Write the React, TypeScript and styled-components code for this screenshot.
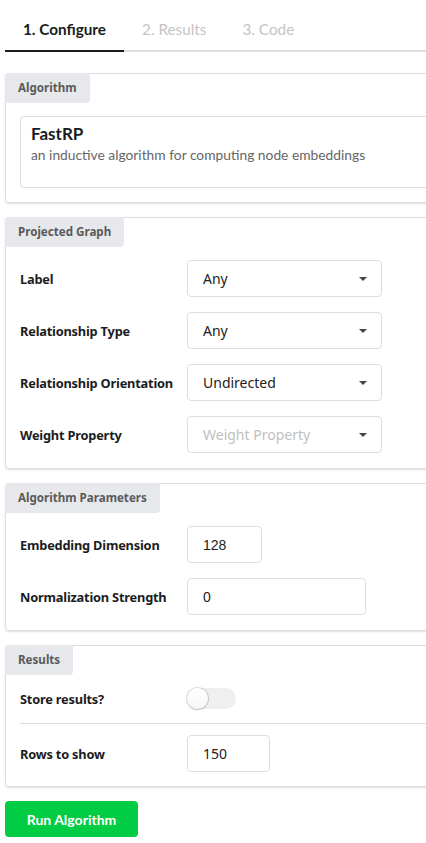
import * as React from 'react'
import styled, { createGlobalStyle } from 'styled-components'

const GlobalStyle = createGlobalStyle`
  html, body {
    margin: 0;
    padding: 0;
    background: #ffffff;
    overflow: hidden;
  }
  body {
    font-family: Lato, "Noto Sans", sans-serif;
    color: rgba(0, 0, 0, 0.87);
  }
`

const Page = styled.div`
  width: 470px;
  padding: 9px 0 0 5px;
  box-sizing: border-box;
`

const TabBar = styled.div`
  display: flex;
  border-bottom: 2px solid #dedede;
  margin-bottom: 21px;
`

const Tab = styled.div<{ $active?: boolean }>`
  padding: 13px 18px;
  font-family: Lato, sans-serif;
  font-size: 15.3px;
  line-height: 15px;
  font-weight: ${p => (p.$active ? 700 : 400)};
  color: ${p => (p.$active ? '#1b1c1d' : '#c4c4c4')};
  border-bottom: 2px solid ${p => (p.$active ? '#1b1c1d' : 'transparent')};
  margin-bottom: -2px;
`

const Segment = styled.section<{ $bottom: number }>`
  border: 1px solid #dededf;
  border-radius: 4px;
  box-shadow: 0 1px 2px rgba(34, 36, 38, 0.15);
  margin-bottom: 14px;
  padding-bottom: ${p => p.$bottom}px;
`

const SegmentLabel = styled.div`
  display: inline-block;
  margin: -1px 0 0 -1px;
  padding: 0 13px;
  height: 30px;
  line-height: 30px;
  background: #e6e8eb;
  border-radius: 4px 0 4px 0;
  font-family: "Noto Sans", sans-serif;
  font-weight: 700;
  font-size: 11.6px;
  color: #5a5a5a;
`

const SegmentBody = styled.div`
  padding: 13px 0 0 14px;
  display: flex;
  flex-direction: column;
`

const Card = styled.div`
  border: 1px solid #dededf;
  border-radius: 4px;
  padding: 6px 10px 22px;
`

const CardHeader = styled.div`
  font-family: Lato, sans-serif;
  font-weight: 700;
  font-size: 17px;
  line-height: 22px;
  color: #1b1c1d;
`

const CardDescription = styled.div`
  font-family: Lato, sans-serif;
  font-size: 13.8px;
  line-height: 20px;
  color: #666666;
`

const FieldList = styled.div<{ $gap?: number }>`
  display: flex;
  flex-direction: column;
  gap: ${p => p.$gap ?? 15}px;
`

const Field = styled.div`
  display: flex;
  align-items: center;
`

const FieldLabel = styled.label`
  width: 167px;
  flex: none;
  font-family: "Noto Sans", sans-serif;
  font-weight: 700;
  font-size: 12.8px;
  letter-spacing: -0.2px;
  color: #1b1c1d;
`

const Select = styled.div<{ $placeholder?: boolean }>`
  width: 195px;
  height: 37px;
  box-sizing: border-box;
  border: 1px solid #dededf;
  border-radius: 4px;
  padding: 0 14px 0 15px;
  display: flex;
  align-items: center;
  justify-content: space-between;
  font-family: "Noto Sans", sans-serif;
  font-size: 14px;
  color: ${p => (p.$placeholder ? '#bfbfbf' : '#222222')};
`

const Caret = styled.span`
  width: 0;
  height: 0;
  border-left: 4px solid transparent;
  border-right: 4px solid transparent;
  border-top: 4px solid #444444;
`

const TextInput = styled.input<{ $width: number; $mono?: boolean }>`
  width: ${p => p.$width}px;
  height: 37px;
  box-sizing: border-box;
  border: 1px solid #dededf;
  border-radius: 4px;
  padding: 0 14px 0 15px;
  font-family: ${p => (p.$mono ? '"Liberation Sans", Arial' : '"Noto Sans"')}, sans-serif;
  font-size: 14px;
  color: #222222;
  outline: none;
  background: #ffffff;
`

const Toggle = styled.div`
  width: 49px;
  height: 21px;
  border-radius: 11px;
  background: #efefef;
  position: relative;
`

const Knob = styled.span`
  position: absolute;
  left: 0;
  top: 0;
  width: 21px;
  height: 21px;
  box-sizing: border-box;
  border-radius: 50%;
  background: linear-gradient(#ffffff, #f6f6f6);
  box-shadow: 0 0 0 1px rgba(34, 36, 38, 0.15), 0 1px 2px rgba(34, 36, 38, 0.15);
`

const Divider = styled.hr`
  border: none;
  border-top: 1px solid #dededf;
  margin: 14px 0 11px;
`

const RunButton = styled.button`
  width: 133px;
  height: 36px;
  border: none;
  border-radius: 4px;
  background: #00cc44;
  color: #ffffff;
  font-family: Lato, sans-serif;
  font-weight: 700;
  font-size: 14px;
  cursor: pointer;
`

type SelectField = { label: string; value: string; placeholder?: boolean }

const graphFields: SelectField[] = [
  { label: 'Label', value: 'Any' },
  { label: 'Relationship Type', value: 'Any' },
  { label: 'Relationship Orientation', value: 'Undirected' },
  { label: 'Weight Property', value: 'Weight Property', placeholder: true },
]

export default function App() {
  return (
    <Page>
      <GlobalStyle />
      <TabBar>
        <Tab $active>1. Configure</Tab>
        <Tab>2. Results</Tab>
        <Tab>3. Code</Tab>
      </TabBar>

      <Segment $bottom={14}>
        <SegmentLabel>Algorithm</SegmentLabel>
        <SegmentBody>
          <Card>
            <CardHeader>FastRP</CardHeader>
            <CardDescription>an inductive algorithm for computing node embeddings</CardDescription>
          </Card>
        </SegmentBody>
      </Segment>

      <Segment $bottom={15}>
        <SegmentLabel>Projected Graph</SegmentLabel>
        <SegmentBody>
          <FieldList>
            {graphFields.map(f => (
              <Field key={f.label}>
                <FieldLabel>{f.label}</FieldLabel>
                <Select $placeholder={f.placeholder}>
                  {f.value}
                  <Caret />
                </Select>
              </Field>
            ))}
          </FieldList>
        </SegmentBody>
      </Segment>

      <Segment $bottom={15}>
        <SegmentLabel>Algorithm Parameters</SegmentLabel>
        <SegmentBody>
          <FieldList>
            <Field>
              <FieldLabel>Embedding Dimension</FieldLabel>
              <TextInput $width={75} $mono readOnly defaultValue="128" />
            </Field>
            <Field>
              <FieldLabel>Normalization Strength</FieldLabel>
              <TextInput $width={179} $mono readOnly defaultValue="0" />
            </Field>
          </FieldList>
        </SegmentBody>
      </Segment>

      <Segment $bottom={14}>
        <SegmentLabel>Results</SegmentLabel>
        <SegmentBody>
          <FieldList $gap={0}>
            <Field>
              <FieldLabel>Store results?</FieldLabel>
              <Toggle>
                <Knob />
              </Toggle>
            </Field>
            <Divider />
            <Field>
              <FieldLabel>Rows to show</FieldLabel>
              <TextInput $width={83} readOnly defaultValue="150" />
            </Field>
          </FieldList>
        </SegmentBody>
      </Segment>

      <RunButton>Run Algorithm</RunButton>
    </Page>
  )
}
